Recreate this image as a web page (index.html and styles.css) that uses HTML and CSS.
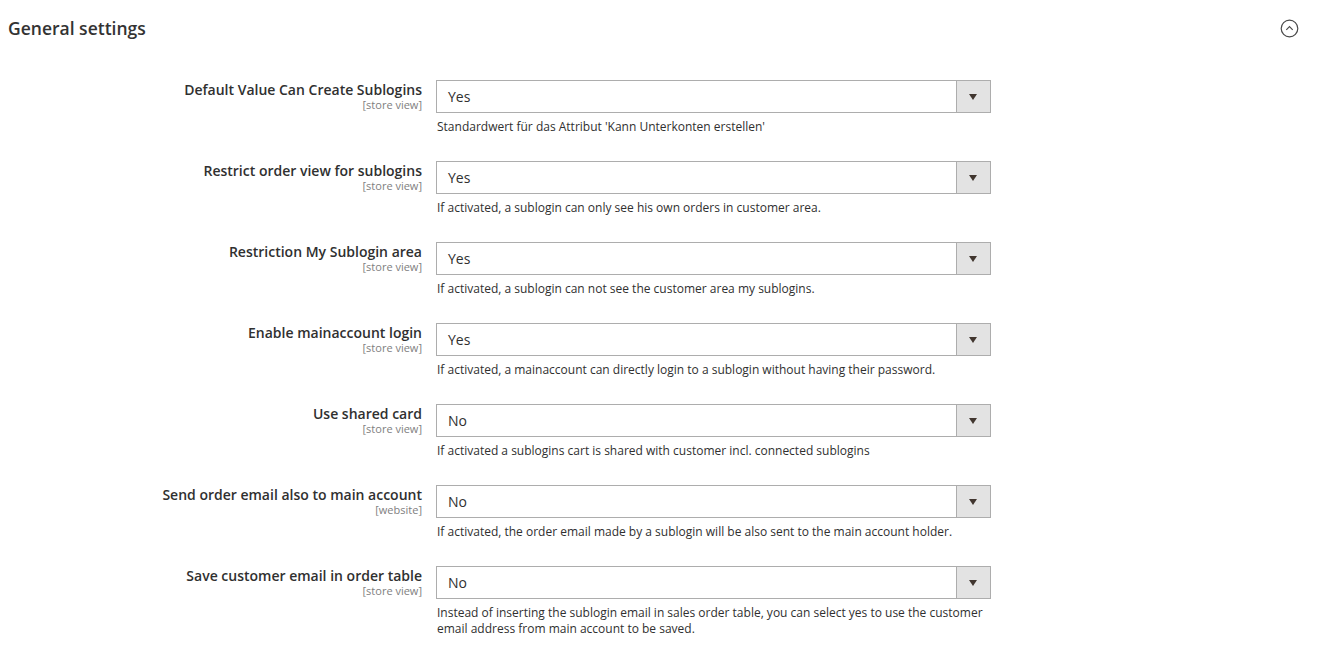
FILE: index.html
```html
<!DOCTYPE html>
<html>
<head>
<meta charset="utf-8">
<link rel="stylesheet" href="styles.css">
</head>
<body>
<div class="section">
  <div class="section-head">
    <span class="section-title">General settings</span>
    <svg class="collapse-icon" width="19" height="19" viewBox="0 0 19 19">
      <circle cx="9.5" cy="9.5" r="8.3" fill="none" stroke="#4a4a4a" stroke-width="1.2"/>
      <path d="M6.3 10.9 L9.5 7.7 L12.7 10.9" fill="none" stroke="#4a4a4a" stroke-width="1.2"/>
    </svg>
  </div>
  <div class="fields">
    <div class="row">
      <div class="label"><span class="label-text">Default Value Can Create Sublogins</span><span class="scope">[store view]</span></div>
      <div class="control">
        <div class="select"><span class="value">Yes</span><span class="arrow"></span></div>
        <p class="note">Standardwert für das Attribut 'Kann Unterkonten erstellen'</p>
      </div>
    </div>
    <div class="row">
      <div class="label"><span class="label-text">Restrict order view for sublogins</span><span class="scope">[store view]</span></div>
      <div class="control">
        <div class="select"><span class="value">Yes</span><span class="arrow"></span></div>
        <p class="note">If activated, a sublogin can only see his own orders in customer area.</p>
      </div>
    </div>
    <div class="row">
      <div class="label"><span class="label-text">Restriction My Sublogin area</span><span class="scope">[store view]</span></div>
      <div class="control">
        <div class="select"><span class="value">Yes</span><span class="arrow"></span></div>
        <p class="note">If activated, a sublogin can not see the customer area my sublogins.</p>
      </div>
    </div>
    <div class="row">
      <div class="label"><span class="label-text">Enable mainaccount login</span><span class="scope">[store view]</span></div>
      <div class="control">
        <div class="select"><span class="value">Yes</span><span class="arrow"></span></div>
        <p class="note">If activated, a mainaccount can directly login to a sublogin without having their password.</p>
      </div>
    </div>
    <div class="row">
      <div class="label"><span class="label-text">Use shared card</span><span class="scope">[store view]</span></div>
      <div class="control">
        <div class="select"><span class="value">No</span><span class="arrow"></span></div>
        <p class="note">If activated a sublogins cart is shared with customer incl. connected sublogins</p>
      </div>
    </div>
    <div class="row">
      <div class="label"><span class="label-text">Send order email also to main account</span><span class="scope">[website]</span></div>
      <div class="control">
        <div class="select"><span class="value">No</span><span class="arrow"></span></div>
        <p class="note">If activated, the order email made by a sublogin will be also sent to the main account holder.</p>
      </div>
    </div>
    <div class="row">
      <div class="label"><span class="label-text">Save customer email in order table</span><span class="scope">[store view]</span></div>
      <div class="control">
        <div class="select"><span class="value">No</span><span class="arrow"></span></div>
        <p class="note">Instead of inserting the sublogin email in sales order table, you can select yes to use the customer email address from main account to be saved.</p>
      </div>
    </div>
  </div>
</div>
</body>
</html>
```

FILE: styles.css
```css
html, body {
  margin: 0;
  padding: 0;
  background: #ffffff;
}
body {
  font-family: "Open Sans", "Liberation Sans", sans-serif;
  color: #303030;
}
.section-head {
  display: flex;
  justify-content: space-between;
  align-items: center;
  padding: 16px 18px 0 8px;
  height: 24px;
}
.section-title {
  font-size: 17.5px;
  font-weight: 600;
  line-height: 24px;
  color: #333333;
}
.collapse-icon {
  display: block;
  margin-top: 1px;
}
.fields {
  padding-top: 40px;
}
.row {
  display: grid;
  grid-template-columns: 422px 555px;
  column-gap: 14px;
  margin-bottom: 26px;
}
.label {
  display: flex;
  flex-direction: column;
  align-items: flex-end;
  text-align: right;
  padding-top: 1px;
}
.label-text {
  font-size: 14px;
  font-weight: 600;
  line-height: 18px;
  color: #303030;
}
.scope {
  font-size: 11px;
  line-height: 12px;
  color: #808080;
}
.select {
  display: flex;
  height: 33px;
  box-sizing: border-box;
  border: 1px solid #adadad;
  background: #ffffff;
}
.value {
  flex: 1;
  padding-left: 11px;
  font-size: 14px;
  line-height: 31px;
  color: #303030;
}
.arrow {
  width: 33px;
  background: #e3e3e3;
  border-left: 1px solid #adadad;
  position: relative;
}
.arrow::after {
  content: "";
  position: absolute;
  left: 12px;
  top: 13px;
  border-left: 4.5px solid transparent;
  border-right: 4.5px solid transparent;
  border-top: 6px solid #41362f;
}
.note {
  margin: 6px 0 0 1px;
  font-size: 12px;
  line-height: 16px;
  color: #303030;
}
```
